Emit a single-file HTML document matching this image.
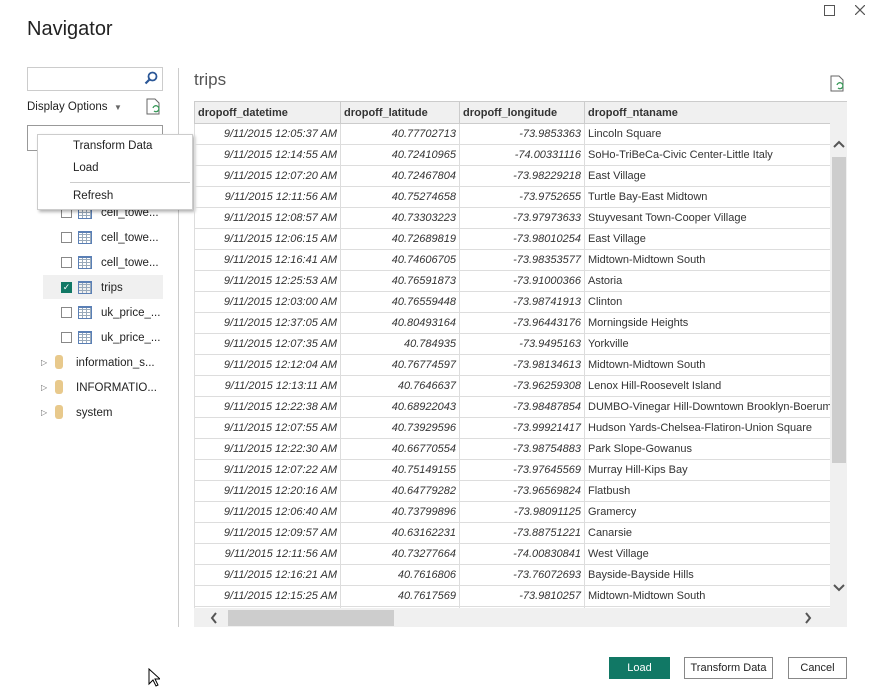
<!DOCTYPE html>
<html><head><style>
body{margin:0;width:873px;height:691px;background:#fff;font-family:"Liberation Sans",sans-serif;position:relative;overflow:hidden;color:#222}
.a{position:absolute}
.t{font-size:11.5px}
table{border-collapse:collapse;font-size:11px;table-layout:fixed;color:#333}
td,th{border:1px solid #ddd;height:20px;padding:0 3px;white-space:nowrap;overflow:hidden}
th{background:#f0f0f0;text-align:left;font-weight:bold;height:21px;border-color:#ccc}
td.r{text-align:right;font-style:italic}
.cb{position:absolute;left:61px;width:9px;height:9px;border:1px solid #888;background:#fff}
.ti{position:absolute;left:78px;width:12px;height:10px;border:1px solid #5a7fb5;background:repeating-linear-gradient(90deg,transparent 0 3px,#9ab 3px 4px),repeating-linear-gradient(0deg,transparent 0 2px,#9ab 2px 3px);border-top-width:2px}
.btn{position:absolute;top:657px;height:20px;border:1px solid #888;font-size:11px;text-align:center;line-height:20px;background:#fff}
</style></head><body>
<div class="a" style="left:27px;top:18px;font-size:20px;color:#222">Navigator</div>
<div class="a" style="left:824px;top:5px;width:9px;height:9px;border:1px solid #555"></div>
<svg class="a" style="left:855px;top:5px" width="10" height="10"><path d="M0 0L10 10M10 0L0 10" stroke="#555" stroke-width="1.2"/></svg>
<!-- left -->
<div class="a" style="left:27px;top:67px;width:134px;height:22px;border:1px solid #ccc"></div>
<svg class="a" style="left:144px;top:71px" width="14" height="14"><circle cx="8.5" cy="5.5" r="4" fill="none" stroke="#2b5797" stroke-width="1.8"/><line x1="5.5" y1="8.5" x2="1.5" y2="12.5" stroke="#2b5797" stroke-width="2.2"/></svg>
<div class="a t" style="left:27px;top:101px">Display Options &nbsp;<span style="font-size:8px;color:#666">▼</span></div>
<svg class="a" style="left:146px;top:98px" width="16" height="18"><path d="M1 1h8l4 4v11H1z" fill="#fff" stroke="#666"/><path d="M8 13a3 3 0 1 0 -1 -3" fill="none" stroke="#3a9a5a" stroke-width="1.3"/></svg>
<div class="a" style="left:27px;top:125px;width:134px;height:24px;border:1px solid #999"></div>
<div class="a" style="left:178px;top:68px;width:1px;height:559px;background:#ccc"></div>
<div class="a" style="left:43px;top:275px;width:120px;height:24px;background:#f0f0f0"></div>
<div class="cb" style="top:207px"></div><div class="ti" style="top:206px"></div><div class="a t" style="left:101px;top:207px">cell_towe...</div>
<div class="cb" style="top:232px"></div><div class="ti" style="top:231px"></div><div class="a t" style="left:101px;top:232px">cell_towe...</div>
<div class="cb" style="top:257px"></div><div class="ti" style="top:256px"></div><div class="a t" style="left:101px;top:257px">cell_towe...</div>
<div class="cb" style="top:282px;background:#117865;border-color:#117865;color:#fff;font-size:9px;line-height:9px;text-align:center">✓</div><div class="ti" style="top:281px"></div><div class="a t" style="left:101px;top:282px">trips</div>
<div class="cb" style="top:307px"></div><div class="ti" style="top:306px"></div><div class="a t" style="left:101px;top:307px">uk_price_...</div>
<div class="cb" style="top:332px"></div><div class="ti" style="top:331px"></div><div class="a t" style="left:101px;top:332px">uk_price_...</div>
<div class="a" style="left:41px;top:358px;font-size:8px;color:#666">▷</div><div class="a" style="left:55px;top:355px;width:8px;height:14px;background:#e8c98c;border-radius:3px"></div><div class="a t" style="left:76px;top:357px">information_s...</div>
<div class="a" style="left:41px;top:383px;font-size:8px;color:#666">▷</div><div class="a" style="left:55px;top:380px;width:8px;height:14px;background:#e8c98c;border-radius:3px"></div><div class="a t" style="left:76px;top:382px">INFORMATIO...</div>
<div class="a" style="left:41px;top:408px;font-size:8px;color:#666">▷</div><div class="a" style="left:55px;top:405px;width:8px;height:14px;background:#e8c98c;border-radius:3px"></div><div class="a t" style="left:76px;top:407px">system</div>
<!-- context menu -->
<div class="a" style="left:37px;top:134px;width:154px;height:74px;background:#fff;border:1px solid #ccc;box-shadow:2px 2px 3px rgba(0,0,0,.3)"></div>
<div class="a t" style="left:73px;top:140px">Transform Data</div>
<div class="a t" style="left:73px;top:162px">Load</div>
<div class="a" style="left:70px;top:182px;width:120px;height:1px;background:#ccc"></div>
<div class="a t" style="left:73px;top:190px">Refresh</div>
<!-- right -->
<div class="a" style="left:194px;top:70px;font-size:17px;color:#555">trips</div>
<svg class="a" style="left:830px;top:75px" width="16" height="18"><path d="M1 1h8l4 4v11H1z" fill="#fff" stroke="#666"/><path d="M8 13a3 3 0 1 0 -1 -3" fill="none" stroke="#3a9a5a" stroke-width="1.3"/></svg>
<div class="a" style="left:194px;top:101px;width:653px;height:507px;overflow:hidden">
<table style="width:700px"><colgroup><col style="width:146px"><col style="width:119px"><col style="width:125px"><col style="width:310px"></colgroup>
<tr><th>dropoff_datetime</th><th>dropoff_latitude</th><th>dropoff_longitude</th><th>dropoff_ntaname</th></tr>
<tr><td class="r">9/11/2015 12:05:37 AM</td><td class="r">40.77702713</td><td class="r">-73.9853363</td><td>Lincoln Square</td></tr>
<tr><td class="r">9/11/2015 12:14:55 AM</td><td class="r">40.72410965</td><td class="r">-74.00331116</td><td>SoHo-TriBeCa-Civic Center-Little Italy</td></tr>
<tr><td class="r">9/11/2015 12:07:20 AM</td><td class="r">40.72467804</td><td class="r">-73.98229218</td><td>East Village</td></tr>
<tr><td class="r">9/11/2015 12:11:56 AM</td><td class="r">40.75274658</td><td class="r">-73.9752655</td><td>Turtle Bay-East Midtown</td></tr>
<tr><td class="r">9/11/2015 12:08:57 AM</td><td class="r">40.73303223</td><td class="r">-73.97973633</td><td>Stuyvesant Town-Cooper Village</td></tr>
<tr><td class="r">9/11/2015 12:06:15 AM</td><td class="r">40.72689819</td><td class="r">-73.98010254</td><td>East Village</td></tr>
<tr><td class="r">9/11/2015 12:16:41 AM</td><td class="r">40.74606705</td><td class="r">-73.98353577</td><td>Midtown-Midtown South</td></tr>
<tr><td class="r">9/11/2015 12:25:53 AM</td><td class="r">40.76591873</td><td class="r">-73.91000366</td><td>Astoria</td></tr>
<tr><td class="r">9/11/2015 12:03:00 AM</td><td class="r">40.76559448</td><td class="r">-73.98741913</td><td>Clinton</td></tr>
<tr><td class="r">9/11/2015 12:37:05 AM</td><td class="r">40.80493164</td><td class="r">-73.96443176</td><td>Morningside Heights</td></tr>
<tr><td class="r">9/11/2015 12:07:35 AM</td><td class="r">40.784935</td><td class="r">-73.9495163</td><td>Yorkville</td></tr>
<tr><td class="r">9/11/2015 12:12:04 AM</td><td class="r">40.76774597</td><td class="r">-73.98134613</td><td>Midtown-Midtown South</td></tr>
<tr><td class="r">9/11/2015 12:13:11 AM</td><td class="r">40.7646637</td><td class="r">-73.96259308</td><td>Lenox Hill-Roosevelt Island</td></tr>
<tr><td class="r">9/11/2015 12:22:38 AM</td><td class="r">40.68922043</td><td class="r">-73.98487854</td><td>DUMBO-Vinegar Hill-Downtown Brooklyn-Boerum Hill</td></tr>
<tr><td class="r">9/11/2015 12:07:55 AM</td><td class="r">40.73929596</td><td class="r">-73.99921417</td><td>Hudson Yards-Chelsea-Flatiron-Union Square</td></tr>
<tr><td class="r">9/11/2015 12:22:30 AM</td><td class="r">40.66770554</td><td class="r">-73.98754883</td><td>Park Slope-Gowanus</td></tr>
<tr><td class="r">9/11/2015 12:07:22 AM</td><td class="r">40.75149155</td><td class="r">-73.97645569</td><td>Murray Hill-Kips Bay</td></tr>
<tr><td class="r">9/11/2015 12:20:16 AM</td><td class="r">40.64779282</td><td class="r">-73.96569824</td><td>Flatbush</td></tr>
<tr><td class="r">9/11/2015 12:06:40 AM</td><td class="r">40.73799896</td><td class="r">-73.98091125</td><td>Gramercy</td></tr>
<tr><td class="r">9/11/2015 12:09:57 AM</td><td class="r">40.63162231</td><td class="r">-73.88751221</td><td>Canarsie</td></tr>
<tr><td class="r">9/11/2015 12:11:56 AM</td><td class="r">40.73277664</td><td class="r">-74.00830841</td><td>West Village</td></tr>
<tr><td class="r">9/11/2015 12:16:21 AM</td><td class="r">40.7616806</td><td class="r">-73.76072693</td><td>Bayside-Bayside Hills</td></tr>
<tr><td class="r">9/11/2015 12:15:25 AM</td><td class="r">40.7617569</td><td class="r">-73.9810257</td><td>Midtown-Midtown South</td></tr>
<tr><td class="r"></td><td class="r"></td><td class="r"></td><td></td></tr>
</table>
<div class="a" style="left:636px;top:22px;width:17px;height:485px;background:#f0f0f0"></div>
<div class="a" style="left:638px;top:56px;width:14px;height:306px;background:#cdcdcd"></div>
<svg class="a" style="left:639px;top:39px" width="12" height="8"><path d="M1 7L6 2L11 7" fill="none" stroke="#555" stroke-width="2"/></svg>
<svg class="a" style="left:639px;top:483px" width="12" height="8"><path d="M1 1L6 6L11 1" fill="none" stroke="#555" stroke-width="2"/></svg>
</div>
<div class="a" style="left:194px;top:608px;width:653px;height:19px;background:#f0f0f0"></div>
<div class="a" style="left:228px;top:610px;width:166px;height:16px;background:#cdcdcd"></div>
<svg class="a" style="left:210px;top:612px" width="8" height="12"><path d="M6 1L2 6L6 11" fill="none" stroke="#555" stroke-width="2"/></svg>
<svg class="a" style="left:804px;top:612px" width="8" height="12"><path d="M2 1L6 6L2 11" fill="none" stroke="#555" stroke-width="2"/></svg>
<!-- buttons -->
<div class="btn" style="left:609px;width:59px;background:#117865;border-color:#117865;color:#fff">Load</div>
<div class="btn" style="left:684px;width:87px">Transform Data</div>
<div class="btn" style="left:788px;width:57px">Cancel</div>
<svg class="a" style="left:148px;top:668px" width="12" height="20"><path d="M1 1v15l4-4 3 6 2-1-3-6h5z" fill="#fff" stroke="#000"/></svg>
</body></html>
